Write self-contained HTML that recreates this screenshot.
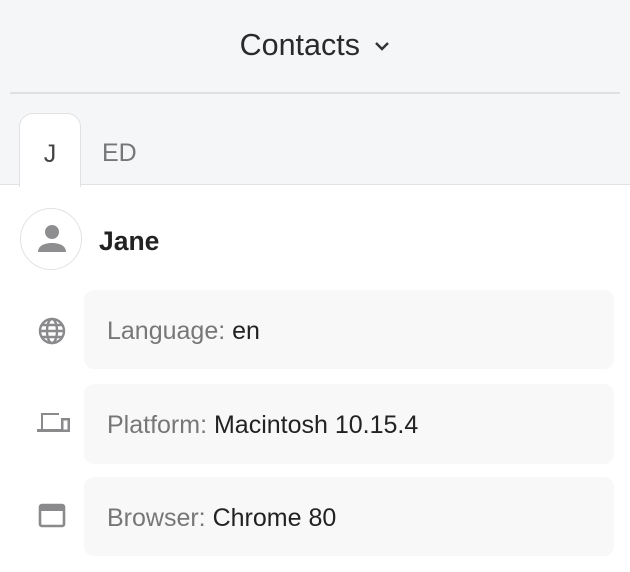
<!DOCTYPE html>
<html><head><meta charset="utf-8"><style>
html,body{margin:0;padding:0;width:630px;height:572px;overflow:hidden;background:#fff;font-family:"Liberation Sans",sans-serif;}
.top{position:absolute;left:0;top:0;width:630px;height:185px;background:#f5f6f7;border-bottom:1px solid #e2e2e4;box-sizing:border-box;}
.title{position:absolute;left:0;width:630px;top:28px;text-align:center;font-size:30.5px;color:#2a2a2c;}
.line{position:absolute;left:10px;right:10px;top:92px;height:2px;background:#e0e0e2;}
.tab{position:absolute;left:19px;top:113px;width:62px;height:74px;background:#fff;border:1px solid #e2e2e4;border-bottom:none;border-radius:14px 14px 0 0;box-sizing:border-box;text-align:center;font-size:25px;color:#444;padding-top:26px;}
.tab2{position:absolute;left:102px;top:139px;font-size:25px;color:#777;}
.av{position:absolute;left:20px;top:208px;width:62px;height:62px;border:1px solid #e2e2e2;border-radius:50%;box-sizing:border-box;}
.name{position:absolute;left:99px;top:226px;font-size:26.5px;font-weight:bold;color:#222;}
.box{position:absolute;left:84px;width:530px;background:#f8f8f8;border-radius:10px;font-size:25px;color:#222;box-sizing:border-box;padding-left:23px;padding-top:3px;}
.box span{color:#777;}
.ic{position:absolute;left:37px;}
</style></head><body>
<div class="top">
<div class="title">Contacts <svg width="16" height="12" viewBox="0 0 16 12" style="margin-left:6px;vertical-align:3px"><path d="M2 3l6 6 6-6" fill="none" stroke="#333" stroke-width="2.4"/></svg></div>
<div class="line"></div>
<div class="tab">J</div>
<div class="tab2">ED</div>
</div>
<div class="av"><svg width="60" height="60" viewBox="0 0 60 60"><circle cx="31" cy="23" r="7" fill="#8e8e90"/><path d="M17 43c0-6 6-9 14-9s14 3 14 9z" fill="#8e8e90"/></svg></div>
<div class="name">Jane</div>

<svg class="ic" style="top:316px" width="30" height="30" viewBox="0 0 30 30"><g fill="none" stroke="#8a8a8c" stroke-width="2.4"><circle cx="15" cy="15" r="12"/><ellipse cx="15" cy="15" rx="5" ry="12"/><path d="M3 15h24M5 9h20M5 21h20"/></g></svg>
<div class="box" style="top:290px;height:79px;line-height:76px"><span>Language:</span> en</div>

<svg class="ic" style="top:411px" width="34" height="26" viewBox="0 0 34 26"><g fill="#8a8a8c"><path d="M4 2h18v2H6v14H4z"/><rect x="0" y="18" width="24" height="3"/><path d="M24 7h9v14H24zM26.5 9.5v9h4v-9z" fill-rule="evenodd"/></g></svg>
<div class="box" style="top:384px;height:80px;line-height:77px"><span>Platform:</span> Macintosh 10.15.4</div>

<svg class="ic" style="top:503px" width="30" height="26" viewBox="0 0 30 26"><rect x="3" y="2" width="24" height="21" rx="2" fill="none" stroke="#8a8a8c" stroke-width="2.6"/><rect x="3" y="2" width="24" height="6" fill="#8a8a8c"/></svg>
<div class="box" style="top:477px;height:79px;line-height:76px"><span>Browser:</span> Chrome 80</div>
</body></html>
